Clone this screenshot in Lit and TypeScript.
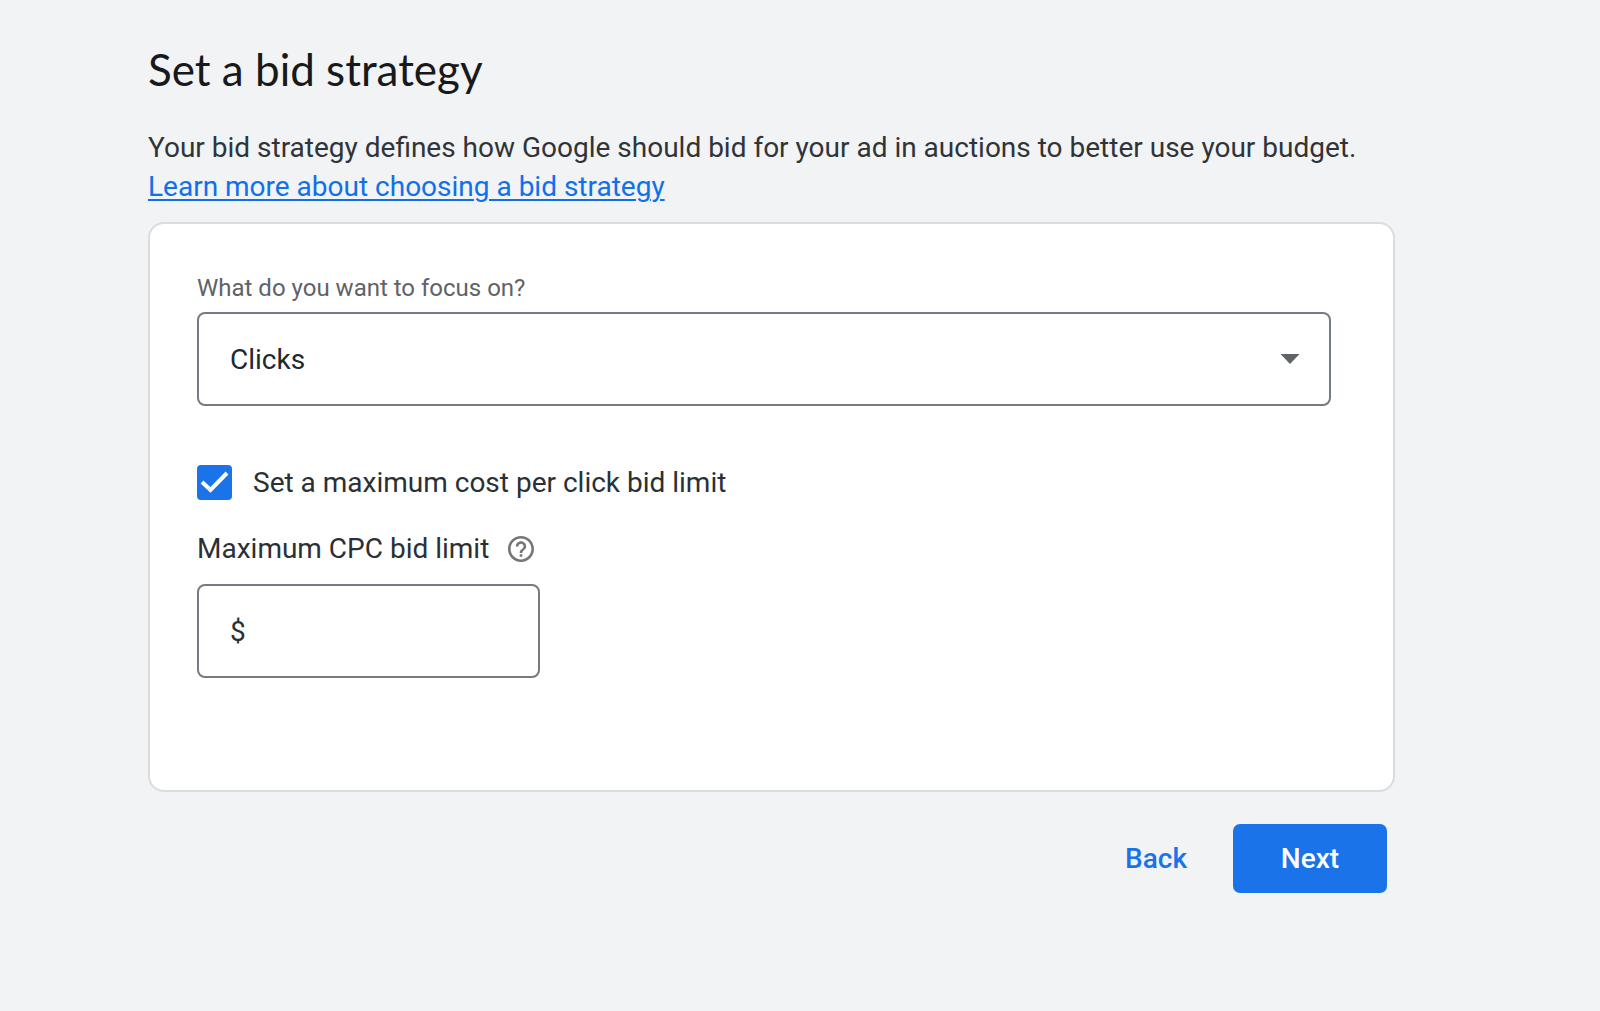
import { LitElement, html, css } from "lit";
import { customElement, state } from "lit/decorators.js";

@customElement("app-root")
export class AppRoot extends LitElement {
  static styles = css`
    :host {
      display: block;
      box-sizing: border-box;
      min-height: 100vh;
      padding: 42px 205px 42px 148px;
      background: #f1f3f4;
      color: #2a3036;
      font: 400 28px/39px Roboto, "Noto Sans", sans-serif;
    }
    * {
      box-sizing: border-box;
    }
    .title {
      margin: 0 0 32px;
      color: #17191b;
      font: 400 44px/54px Lato, Roboto, sans-serif;
    }
    .intro {
      margin: 0;
      color: #303439;
    }
    .link {
      color: #1070eb;
      text-decoration: underline;
      text-decoration-thickness: 2px;
      text-underline-offset: 3px;
    }
    .card {
      display: flex;
      flex-direction: column;
      align-items: flex-start;
      min-height: 570px;
      margin-top: 16px;
      padding: 48px 62px 48px 47px;
      background: #fff;
      border: 2px solid #dadce0;
      border-radius: 16px;
    }
    .caption {
      margin-bottom: 8px;
      color: #5f6368;
      font-size: 24px;
      line-height: 32px;
    }
    .select-box {
      display: grid;
      align-self: stretch;
      align-items: center;
    }
    .select {
      grid-area: 1 / 1;
      width: 100%;
      height: 94px;
      padding: 0 31px;
      color: #202a2f;
      background: #fff;
      border: 2px solid #757b82;
      border-radius: 8px;
      appearance: none;
      font: inherit;
    }
    .arrow {
      grid-area: 1 / 1;
      justify-self: end;
      width: 20px;
      height: 10px;
      margin-right: 31px;
      fill: #5f6368;
      pointer-events: none;
    }
    .check-row {
      display: flex;
      align-items: center;
      gap: 21px;
      margin-top: 57px;
    }
    .check-box {
      display: grid;
    }
    .check {
      grid-area: 1 / 1;
      width: 35px;
      height: 35px;
      margin: 0;
      appearance: none;
      background: #fff;
      border: 4px solid #5f6368;
      border-radius: 4px;
    }
    .check:checked {
      background: #1a73e8;
      border-color: #1a73e8;
    }
    .tick {
      grid-area: 1 / 1;
      width: 35px;
      height: 35px;
      fill: none;
      stroke: #fff;
      stroke-width: 4;
      pointer-events: none;
    }
    .limit-row {
      display: flex;
      align-items: center;
      gap: 19px;
      margin: 27px 0 16px;
    }
    .help {
      display: grid;
      padding: 0;
      background: none;
      border: 0;
      color: #757575;
    }
    .help-icon {
      width: 26px;
      height: 26px;
      fill: currentColor;
    }
    .money {
      display: flex;
      align-items: center;
      gap: 8px;
      width: 343px;
      max-width: 100%;
      height: 94px;
      padding: 0 31px;
      border: 2px solid #757b82;
      border-radius: 8px;
    }
    .amount {
      flex: 1;
      min-width: 0;
      padding: 0;
      background: none;
      border: 0;
      outline: 0;
      color: inherit;
      font: inherit;
    }
    .actions {
      display: flex;
      justify-content: flex-end;
      gap: 16px;
      margin-top: 32px;
      padding-right: 8px;
    }
    .button {
      height: 69px;
      padding: 0 30px;
      background: none;
      border: 0;
      border-radius: 7px;
      color: #1a73e8;
      font: 500 28px/36px Roboto, sans-serif;
    }
    .primary {
      min-width: 154px;
      background: #1a73e8;
      color: #fff;
    }
  `;

  @state() private limited = true;

  private toggle(e: Event) {
    this.limited = (e.target as HTMLInputElement).checked;
  }

  render() {
    return html`
      <h1 class="title">Set a bid strategy</h1>
      <p class="intro">
        Your bid strategy defines how Google should bid for your ad in auctions to better use your budget.<br />
        <a class="link" href="#learn-more">Learn more about choosing a bid strategy</a>
      </p>
      <section class="card">
        <label class="caption" for="focus">What do you want to focus on?</label>
        <div class="select-box">
          <select class="select" id="focus">
            <option selected>Clicks</option>
          </select>
          <svg class="arrow" viewBox="0 0 20 10" aria-hidden="true"><path d="M0.500 0h19L10 10z" /></svg>
        </div>
        <div class="check-row">
          <span class="check-box">
            <input class="check" id="limit" type="checkbox" .checked=${this.limited} @change=${this.toggle} />
            ${this.limited
              ? html`<svg class="tick" viewBox="0 0 35 35" aria-hidden="true"><path d="M5 17l8.500 8L30 8" /></svg>`
              : null}
          </span>
          <label for="limit">Set a maximum cost per click bid limit</label>
        </div>
        <div class="limit-row">
          <label for="amount">Maximum CPC bid limit</label>
          <button class="help" type="button" aria-label="Help">
            <svg class="help-icon" viewBox="2 2 20 20" aria-hidden="true">
              <path
                d="M11 18h2v-2h-2v2zm1-16C6.480 2 2 6.480 2 12s4.480 10 10 10 10-4.480 10-10S17.520 2 12 2zm0 18c-4.410 0-8-3.590-8-8s3.590-8 8-8 8 3.590 8 8-3.590 8-8 8zm0-14c-2.210 0-4 1.790-4 4h2c0-1.100.9-2 2-2s2 .9 2 2c0 2-3 1.750-3 5h2c0-2.250 3-2.500 3-5 0-2.210-1.790-4-4-4z"
              />
            </svg>
          </button>
        </div>
        <div class="money">
          <span>$</span>
          <input class="amount" id="amount" type="text" inputmode="decimal" />
        </div>
      </section>
      <div class="actions">
        <button class="button" type="button">Back</button>
        <button class="button primary" type="button">Next</button>
      </div>
    `;
  }
}
